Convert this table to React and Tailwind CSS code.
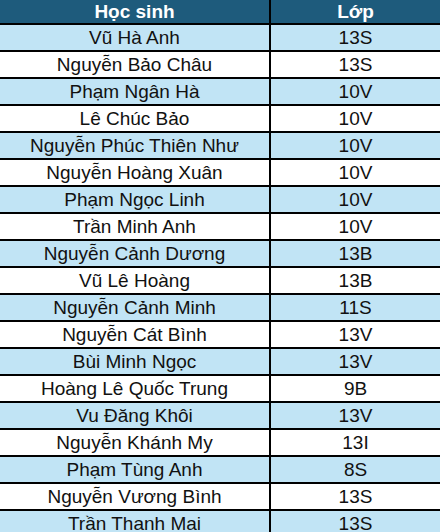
const rows = [
  ['Vũ Hà Anh', '13S'],
  ['Nguyễn Bảo Châu', '13S'],
  ['Phạm Ngân Hà', '10V'],
  ['Lê Chúc Bảo', '10V'],
  ['Nguyễn Phúc Thiên Như', '10V'],
  ['Nguyễn Hoàng Xuân', '10V'],
  ['Phạm Ngọc Linh', '10V'],
  ['Trần Minh Anh', '10V'],
  ['Nguyễn Cảnh Dương', '13B'],
  ['Vũ Lê Hoàng', '13B'],
  ['Nguyễn Cảnh Minh', '11S'],
  ['Nguyễn Cát Bình', '13V'],
  ['Bùi Minh Ngọc', '13V'],
  ['Hoàng Lê Quốc Trung', '9B'],
  ['Vu Đăng Khôi', '13V'],
  ['Nguyễn Khánh My', '13I'],
  ['Phạm Tùng Anh', '8S'],
  ['Nguyễn Vương Bình', '13S'],
  ['Trần Thanh Mai', '13S'],
]

export default function App() {
  return (
    <div className="w-[440px] h-[532px] overflow-hidden bg-white text-[#111]"
      style={{ fontFamily: '"Liberation Sans", Arial, sans-serif' }}>
      <div className="grid grid-cols-[271px_1fr] h-[25px] bg-[#1e5b7c] text-white font-bold text-[19px] leading-none border-b-2 border-black">
        <div className="flex items-center justify-center border-r-2 border-black">Học sinh</div>
        <div className="flex items-center justify-center">Lớp</div>
      </div>
      {rows.map(([name, cls], i) => (
        <div key={i}
          className={`grid grid-cols-[271px_1fr] h-[27px] text-[19px] leading-none border-b-2 border-black ${i % 2 === 0 ? 'bg-[#c1e4f5]' : 'bg-white'}`}>
          <div className="flex items-center justify-center border-r-2 border-black">{name}</div>
          <div className="flex items-center justify-center">{cls}</div>
        </div>
      ))}
    </div>
  )
}
